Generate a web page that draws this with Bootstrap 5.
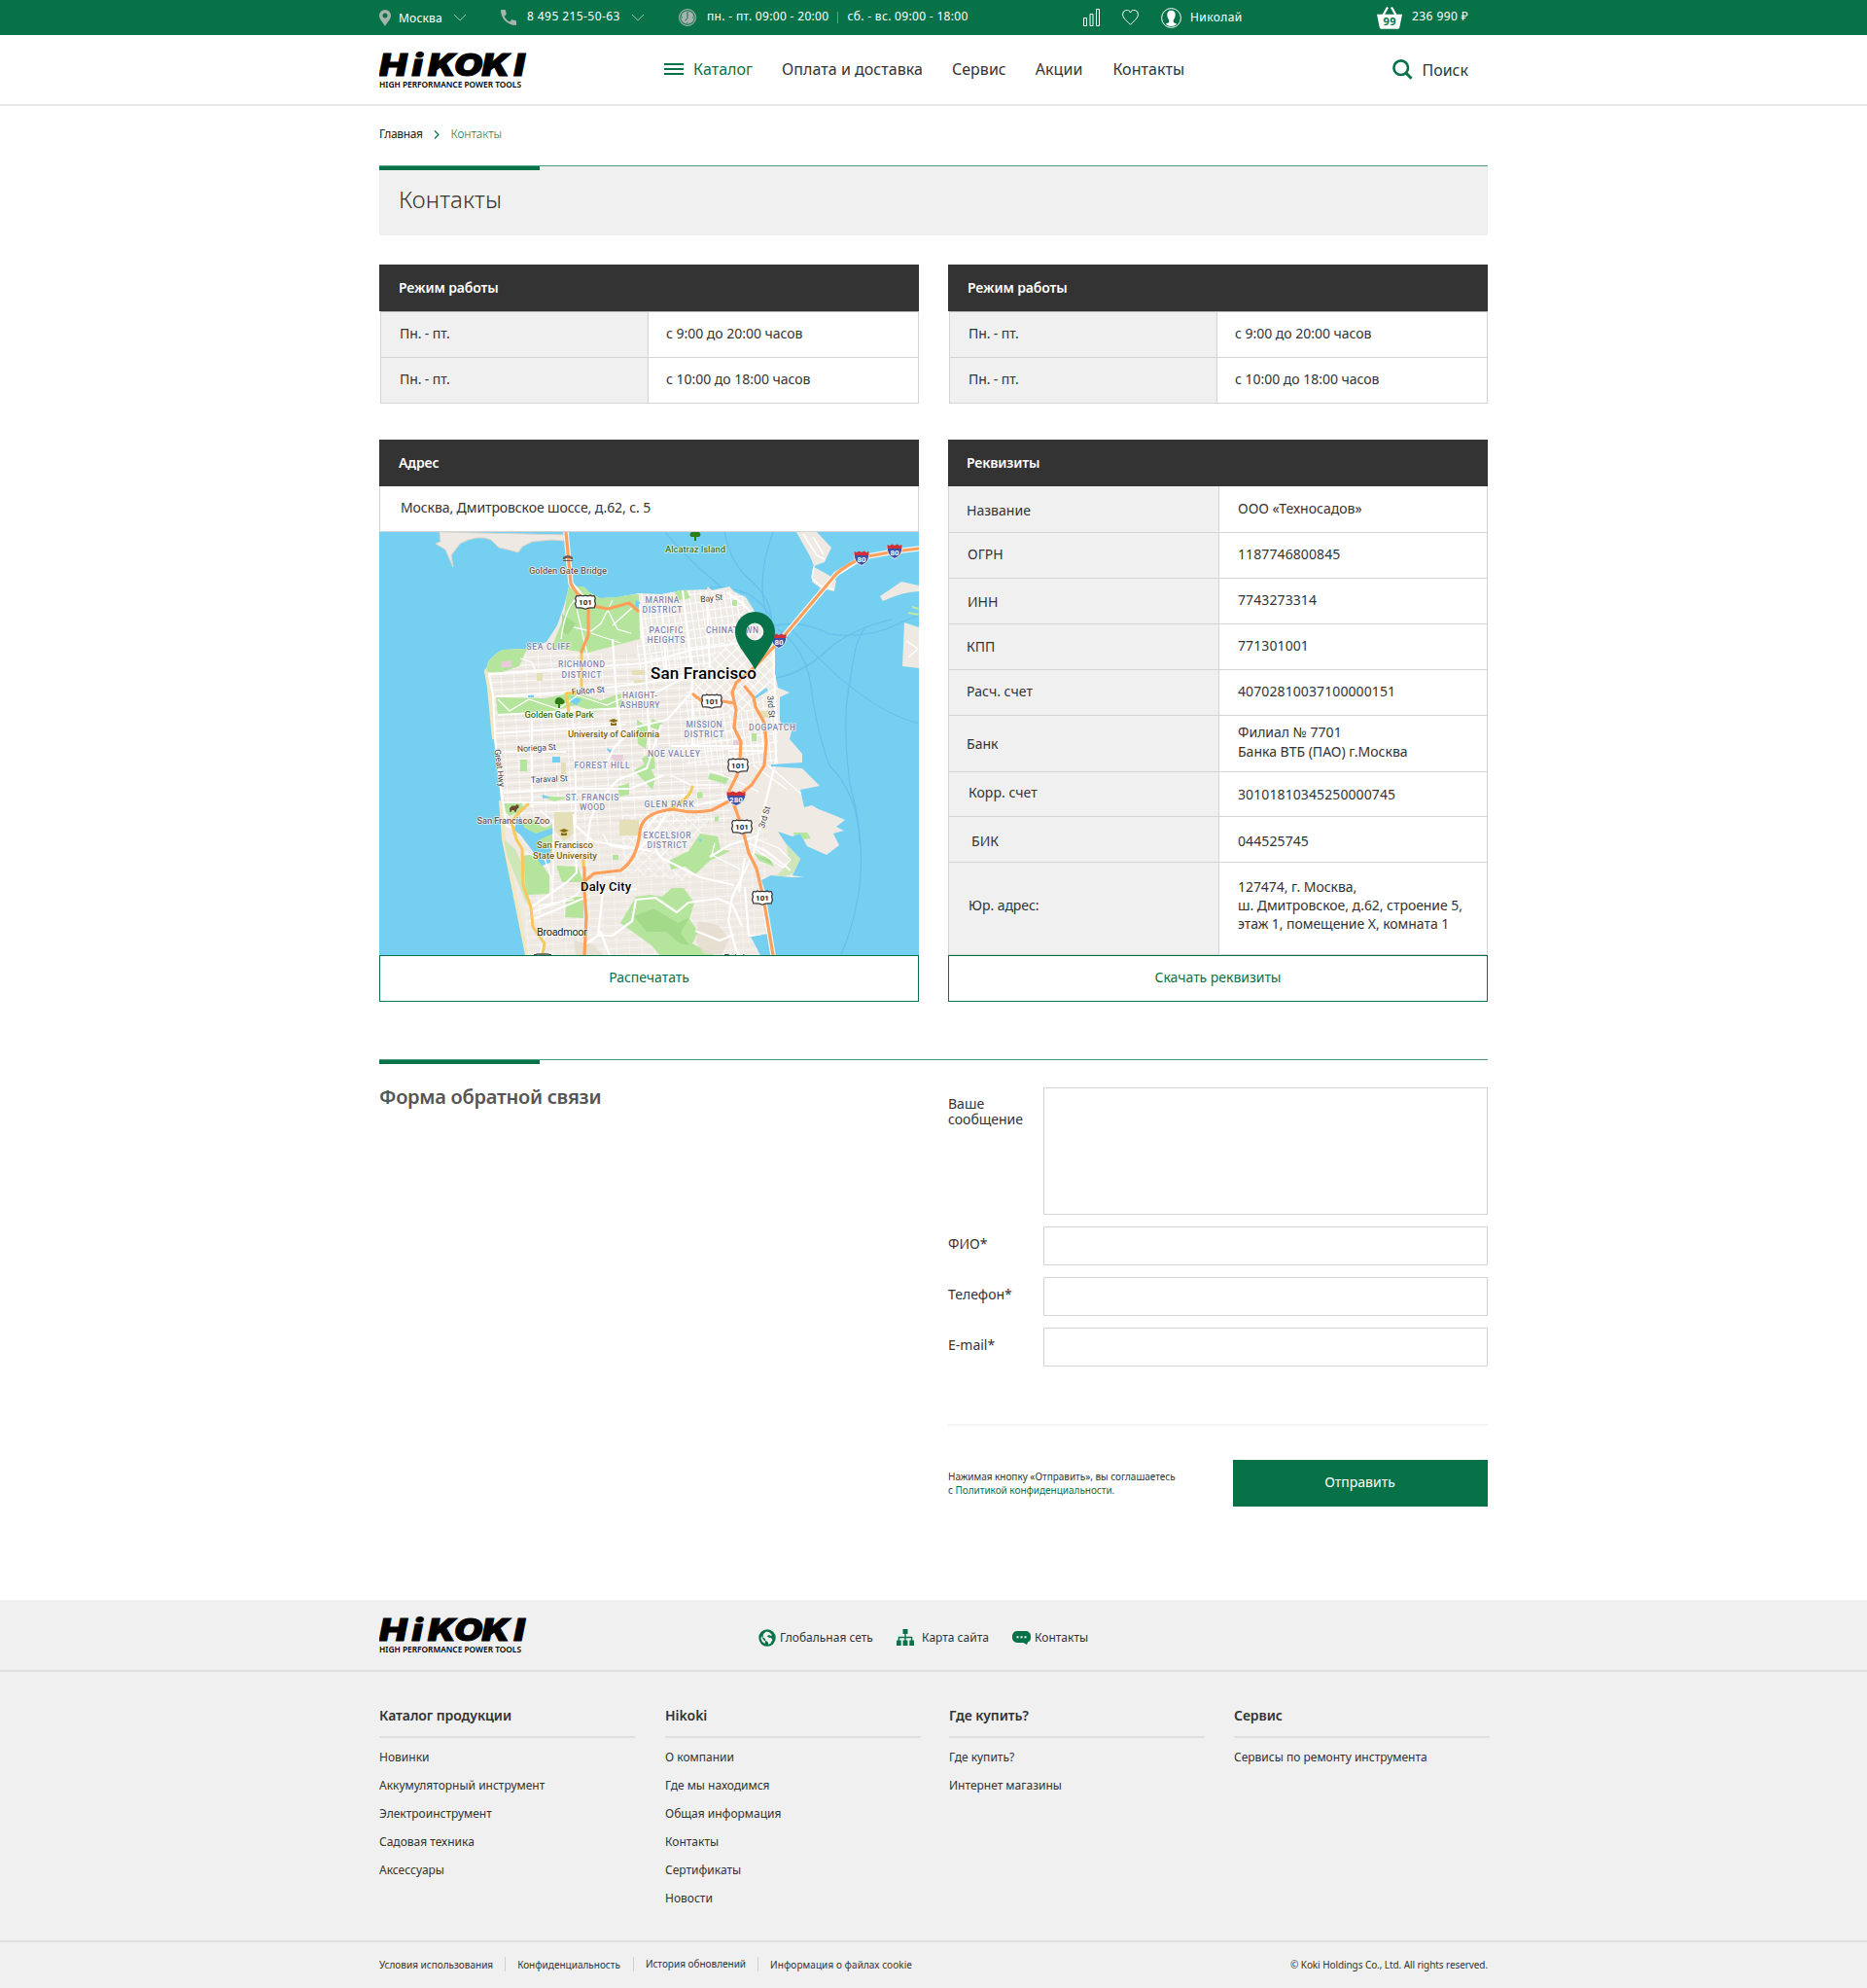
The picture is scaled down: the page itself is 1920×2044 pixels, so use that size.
<!DOCTYPE html>
<html lang="ru">
<head>
<meta charset="utf-8">
<meta name="viewport" content="width=device-width, initial-scale=1">
<title>HiKOKI — Контакты</title>
<link href="https://cdn.jsdelivr.net/npm/bootstrap@5.3.0/dist/css/bootstrap.min.css" rel="stylesheet">
<style>
:root{--green:#077248;--ink:#333;--line:#d4d4d4;--soft:#f0f0f0}
body{font-family:"Noto Sans","Open Sans",sans-serif;font-size:14px;line-height:20px;color:var(--ink);background:#fff}
a{color:inherit;text-decoration:none}
svg{display:block;flex:none}
.wrap{width:1140px;margin:0 auto}
.topbar{background:var(--green);height:36px;color:#fff;font-size:12px;letter-spacing:.42px}
.topbar .up{padding-bottom:2px}
.slot-city{width:125px}.slot-phone{width:183px}.slot-time{width:415px;letter-spacing:.32px}
.slot-stat{width:41px}.slot-fav{width:40px}.slot-user{width:222px}
.city-name{margin-left:8px;letter-spacing:.2px;padding-top:1px}
.chev-city{margin-right:35px}
.gap-l{margin-left:11px}.gap-m{margin-left:9px}.gap-s{margin-left:4px}.gap-x{margin-left:10px}
.vsep{width:1px;height:12px;background:#5d9f84;margin:0 9px}
.mainbar{height:73px;border-bottom:2px solid #e8e8e8;font-size:16px}
.mainbar .links{margin-left:140px;gap:30px;padding-bottom:1px;letter-spacing:.04px}
.mainbar .links a:last-child{margin-left:1px}
.cat{color:var(--green)}
.find{margin-right:20px}
.brand{width:153px;height:38px}
.crumbs{font-size:12px;height:61px;padding-bottom:3px;color:#222;letter-spacing:-.38px}
.crumbs svg{margin:1px 12px 0 11px}
.crumbs .cur{color:var(--green);font-weight:300;letter-spacing:0}
.rule{height:5px;border-top:1px solid #4c9b7c;position:relative}
.rule::before{content:"";display:block;width:165px;height:4px;background:var(--green)}
.rule.on-soft{background:var(--soft)}
.title-box{height:67px;background:var(--soft);padding:13px 20px 0;font-size:24px;font-weight:300;line-height:34px;margin:0;letter-spacing:.15px}
.half{width:555px}
.head{height:48px;background:#333;color:#fff;font-weight:600;line-height:48px;padding:0 20px;margin:0;font-size:14px;letter-spacing:-.13px}
.head.req-head{padding-left:19px}
.info{border-left:1px solid var(--line);border-right:1px solid var(--line)}
.info>div{border-bottom:1px solid var(--line)}
.key{background:var(--soft);border-right:1px solid var(--line);padding-left:19px;padding-bottom:2px}
.val{padding-left:19px;padding-bottom:2px;line-height:19.3px}
.hours{margin-left:1px;border-top:1px solid #bbb;letter-spacing:-.02px}
.hours>div{height:47px}.hours .key{width:275px;letter-spacing:-.1px}.hours .val{padding-left:18px}
.req .key{width:278px;letter-spacing:.03px}
.num{letter-spacing:.1px}
.req .r48{height:48px}.req .r47{height:47px}.req .r46{height:46px}.req .r58{height:58px}.req .r95{height:95px}
.req .low{padding-bottom:0}.req .low2{padding-top:2px;padding-bottom:0}.req .low3{padding-top:4px;padding-bottom:0}
.req .high{padding-bottom:4px}
.req .pl-18{padding-left:18px}.req .pl-20{padding-left:20px}.req .pl-23{padding-left:23px}
.req .jur{padding-bottom:7px;letter-spacing:-.05px}
.addr{height:47px;padding:0 21px 2px;letter-spacing:-.1px}
.btn-line{height:48px;border:1px solid var(--green);border-radius:0;color:var(--green);font-size:14px;letter-spacing:-.03px;padding:0 0 3px;width:100%}
.fb-title{font-size:20px;font-weight:600;line-height:28px;color:#555;margin:0;letter-spacing:-.27px;padding-top:20px}
.f-lab{width:98px;line-height:16px;padding-top:10px}
.f-lab.first{padding-top:9px}
.f-in{border:1px solid var(--line);border-radius:0;height:40px;padding:8px 12px;flex:1}
.f-in.tall{height:131px;resize:none}
.thin{height:2px;background:#f4f4f4;margin:59px 0 35px}
.fine{font-size:10px;line-height:14px;width:293px;padding-top:10px;letter-spacing:-.02px}
.send{width:262px;height:48px;border-radius:0;background:var(--green);color:#fff;font-size:14px;padding:0 1px 3px 0}
.foot{background:var(--soft);height:399px}
.foot-top{height:74px;border-bottom:2px solid #dfdfdf;font-size:12px}
.foot-top a{padding-top:5px}
.fcols{height:276px;padding-top:32px;font-size:12px}
.fcol{width:263px}
.fcol h3{font-size:14px;font-weight:600;line-height:26px;margin:0;height:34px;letter-spacing:-.07px}
.fcol hr{margin:0 0 5px;border:0;height:2px;background:#dfdfdf;opacity:1}
.fcol a{display:block;line-height:29px}
.foot-bot{border-top:2px solid #dfdfdf;height:49px;font-size:10px;line-height:14px;padding-bottom:2px}
.bsep{width:1px;height:15px;background:#d0d0d0;margin:0 12px}
.map text{font-family:Roboto,"Open Sans",sans-serif;font-size:9.5px;text-anchor:middle;paint-order:stroke;stroke:#fff;stroke-width:1.6px;stroke-opacity:.7;stroke-linejoin:round;font-weight:500}
.map .hood{fill:#7f87b2;font-size:8.5px}
.map .st{fill:#444;font-size:8.8px;font-weight:400}
.map .edu{fill:#7a6210}.map .poi{fill:#76584c}.map .grn{fill:#34761d}
.map .city-l{font-size:17px}.map .city-m{font-size:13px}.map .city-s{font-size:11px;font-weight:400;fill:#222}
.map .rt-us{stroke:none;fill:#222;font-size:8px;font-weight:700}
.map .rt-i{stroke:none;fill:#fff;font-size:8px;font-weight:700}
</style>
</head>
<body>
<svg width="0" height="0" class="position-absolute" aria-hidden="true">
  <defs>
    <symbol id="logo" viewBox="0 0 153 38">
      <text transform="translate(0 25) scale(1.22 1)" x="0 27.400 41 63.200 86.400 113.500" y="0" font-family="Inter, Roboto, sans-serif" font-weight="900" font-style="italic" font-size="31" stroke="#000" stroke-width=".9">HiKOKI</text>
      <text x="0" y="36.500" font-family="Noto Sans, sans-serif" font-weight="600" font-size="8.600" textLength="146" lengthAdjust="spacingAndGlyphs">HIGH PERFORMANCE POWER TOOLS</text>
    </symbol>
    <symbol id="chev" viewBox="0 0 14 8"><path d="M1 1l6 6 6-6" fill="none" stroke="#9cc4b2" stroke-width="1"/></symbol>
  </defs>
</svg>

<div class="topbar">
  <div class="wrap d-flex align-items-center h-100">
    <div class="slot-city d-flex align-items-center">
      <svg width="12" height="17" viewBox="0 0 12 17"><path fill="#a7b3ae" fill-rule="evenodd" d="M6 0a6 6 0 0 1 6 6c0 4-4 7-6 11C4 13 0 10 0 6a6 6 0 0 1 6-6zm0 3.500a2.500 2.500 0 1 0 0 5 2.500 2.500 0 0 0 0-5z"/></svg>
      <span class="city-name">Москва</span><svg class="ms-auto chev-city" width="14" height="8"><use href="#chev"/></svg>
    </div>
    <div class="slot-phone d-flex align-items-center">
      <svg width="16" height="16" viewBox="0 0 16 16"><path fill="#a7b3ae" d="M.5 0h3.600c.5 0 .8.400.9.800l.7 3.300c.1.400 0 .7-.3 1L3.600 6.700c1.200 2.500 3.200 4.500 5.700 5.700l1.600-1.800c.3-.3.600-.4 1-.3l3.300.7c.4.100.8.500.8.900v3.600c0 .3-.2.500-.5.500C7 16 0 9 0 .5 0 .2.200 0 .5 0z"/></svg>
      <span class="up gap-l">8 495 215-50-63</span><svg class="gap-l" width="14" height="8"><use href="#chev"/></svg>
    </div>
    <div class="slot-time d-flex align-items-center">
      <svg width="18" height="18" viewBox="0 0 18 18"><circle cx="9" cy="9" r="8.400" fill="none" stroke="#a7b3ae" stroke-width="1.200"/><circle cx="9" cy="9" r="6.800" fill="#a7b3ae"/><path d="M9 4v5.500L6.500 12.500M9 3v1M9 14v1M3 9h1M14 9h1" stroke="#077248" fill="none"/></svg>
      <span class="up gap-l">пн. - пт. 09:00 - 20:00</span><i class="vsep"></i><span class="up">сб. - вс. 09:00 - 18:00</span>
    </div>
    <a class="slot-stat" href="#"><svg width="18" height="18" viewBox="0 0 18 18" fill="none" stroke="#fff"><path d="M1.500 9.500h3v8h-3zM8 5.500h3v12H8zM14.500.500h3v17h-3z"/></svg></a>
    <a class="slot-fav" href="#"><svg width="17" height="16" viewBox="0 0 17 16" fill="none" stroke="#fff"><path d="M8.500 15.300C6 12.500.6 9 .6 4.800A4.100 4.100 0 0 1 8.500 3a4.100 4.100 0 0 1 7.900 1.800c0 4.200-5.400 7.700-7.900 10.500z"/></svg></a>
    <a class="slot-user d-flex align-items-center" href="#"><svg width="21" height="21" viewBox="0 0 21 21"><circle cx="10.500" cy="10.500" r="9.900" fill="none" stroke="#fff"/><path fill="#fff" d="M10.500 2.800c3 0 4.400 2 4.200 4.500-.1 2.200-.8 4-2 5.200v2c.4 1 2.300 1.400 3.600 2.300a8.800 8.800 0 0 1-11.600 0c1.300-.9 3.200-1.300 3.600-2.300v-2c-1.200-1.200-1.900-3-2-5.200-.2-2.500 1.200-4.500 4.200-4.500z"/></svg><span class="gap-m">Николай</span></a>
    <a class="d-flex align-items-center" href="#"><svg width="26" height="23" viewBox="0 0 26 23"><path d="M6.500 8.500l4.500-8M19.500 8.500L15 .5" stroke="#fff" stroke-width="2.200"/><path fill="#fff" d="M0 7.800h26L23.300 21c-.2 1.200-.8 1.800-2 1.800H4.700c-1.200 0-1.800-.6-2-1.800z"/><text x="13.200" y="19" text-anchor="middle" font-size="11" font-weight="700" fill="#077248" font-family="Noto Sans, sans-serif">99</text></svg><span class="up gap-x">236 990 ₽</span></a>
  </div>
</div>

<header class="mainbar">
  <div class="wrap d-flex align-items-center h-100">
    <svg class="brand"><use href="#logo"/></svg>
    <nav class="links d-flex align-items-center">
      <a href="#" class="cat d-flex align-items-center"><svg width="20" height="12" viewBox="0 0 20 12"><path d="M0 1h20M0 6h20M0 11h20" stroke="#077248" stroke-width="2"/></svg><span class="gap-x">Каталог</span></a>
      <a href="#">Оплата и доставка</a><a href="#">Сервис</a><a href="#">Акции</a><a href="#">Контакты</a>
    </nav>
    <a href="#" class="find d-flex align-items-center ms-auto"><svg width="21" height="21" viewBox="0 0 21 21" fill="none" stroke="#077248"><circle cx="8.700" cy="8.700" r="7.300" stroke-width="2.600"/><path d="M13.500 13.500l6 6.300" stroke-width="3"/></svg><span class="gap-m">Поиск</span></a>
  </div>
</header>

<main class="wrap">
  <nav class="crumbs d-flex align-items-center"><a href="#">Главная</a><svg width="6" height="9" viewBox="0 0 6 9"><path d="M1 .5l4 4-4 4" fill="none" stroke="#077248" stroke-width="1.200"/></svg><span class="cur">Контакты</span></nav>
  <div class="rule on-soft"></div>
  <h1 class="title-box">Контакты</h1>

  <div class="d-flex justify-content-between" style="margin-top:30px">
    <section class="half"><h2 class="head">Режим работы</h2>
      <div class="info hours"><div class="d-flex"><div class="key d-flex align-items-center">Пн. - пт.</div><div class="val d-flex align-items-center">с 9:00 до 20:00 часов</div></div><div class="d-flex"><div class="key d-flex align-items-center">Пн. - пт.</div><div class="val d-flex align-items-center">с 10:00 до 18:00 часов</div></div></div>
    </section>
    <section class="half"><h2 class="head">Режим работы</h2>
      <div class="info hours"><div class="d-flex"><div class="key d-flex align-items-center">Пн. - пт.</div><div class="val d-flex align-items-center">с 9:00 до 20:00 часов</div></div><div class="d-flex"><div class="key d-flex align-items-center">Пн. - пт.</div><div class="val d-flex align-items-center">с 10:00 до 18:00 часов</div></div></div>
    </section>
  </div>

  <div class="d-flex justify-content-between" style="margin-top:37px">
    <section class="half"><h2 class="head">Адрес</h2>
      <div class="info"><div class="addr d-flex align-items-center">Москва, Дмитровское шоссе, д.62, с. 5</div></div>
      <svg class="map" width="555" height="435" viewBox="0 0 555 435">
        <defs>
          <path id="sf" d="M152 435L137 360 128 316 125 276 118 213 113 160 110 143 112 133 120 125 127 121 150 120 160 117 172 113 183 96 190 76 195 56 210 56 216 62 227 68 245 67 267 63 290 64 310 60 337 59 338 56 342 60 360 56 366 62 377 67 387 83 403 100 407 123 407 146 410 160 422 165 412 170 412 193 414 199 425 201 422 213 435 228 435 237 403 239 403 241 435 243 453 261 433 265 437 283 445 281 452 285 470 292 479 296 470 303 478 307 467 310 473 322 460 332 440 323 433 310 425 313 410 308 418 320 433 336 425 353 437 355 423 355 403 353 393 358 398 373 400 413 382 416 392 435z"/>
          <clipPath id="cl"><use href="#sf"/></clipPath>
          <pattern id="g1" width="13" height="8" patternUnits="userSpaceOnUse" patternTransform="rotate(-3)"><path d="M0 .5h13M.5 0v8" stroke="#fff" stroke-width="1" opacity=".75"/><path d="M0 4.500h13" stroke="#e3dbd8" stroke-width=".6"/></pattern>
          <pattern id="g2" width="8" height="8" patternUnits="userSpaceOnUse" patternTransform="rotate(45)"><path d="M0 .5h8M.5 0v8" stroke="#fff" stroke-width="1.200"/></pattern>
          <pattern id="g3" width="6" height="9" patternUnits="userSpaceOnUse" patternTransform="rotate(-8)"><path d="M0 .5h6M.5 0v9" stroke="#fff" stroke-width="1"/></pattern>
          <g id="us"><path d="M-9-6.500q2.500 1 4-.6 2 1.400 5 .3 3 1.100 5-.3 1.500 1.600 4 .6l1.300 2.700q-1.500 2.500.2 5.500l-1.500 4.300q-5-.6-9 1.200-4-1.800-9-1.200L-10.500 1.700q1.700-3 .2-5.500z" fill="#fff" stroke="#333" stroke-width="1.200"/><text class="rt-us" y="3">101</text></g>
          <g id="i80"><path d="M-7.500-5.500h15q1.500 9-7.500 13-9-4-7.500-13z" fill="#3e4fa8" stroke="#fff" stroke-width=".8"/><path d="M-7.500-3v-4l2.500 1 2.500-1.500L0-6l2.500-1.500L5-6l2.500-1v4z" fill="#cf2f36"/><text class="rt-i" y="4">80</text></g>
        </defs>
        <rect width="555" height="435" fill="#75cff0"/>
        <g fill="none" stroke="#5db7e6" stroke-width="1.100" opacity=".65">
          <path d="M294 0q20 25 50 50t30 55M355 0q5 30 25 48 30 25 22 60M405 0q-22 60 0 100M330 64q10-15 50 0 28 18 25 40M403 97q30-8 60 8 40 5 70-10t22-4M500 99q-10 8-15 50-10 40-1 110 14 50 11 95-3 40-20 81"/>
          <path d="M410 100q30 20 35 65 5 40 18 75 30 30 31 80M408 150q30-5 60-35 30-20 60-25M425 101q70 80 130 96"/>
        </g>
        <g fill="#efe9e3"><path d="M62 0l1 10-5 2 10 6 8 18-2-12 9-12q18-10 32-4l8 8 9 2 11 3 4-6 10-5 20-2 12 1 3-6z" stroke="#ded6cd"/>
          <path d="M429 0h21l15 16-7 15-11 4-4-10zM447 36l13 7 10 7-2 11-14-3-9-7zM515 66l22-15 18 4v6q-15 0-37 10zM540 93l15 5v42l-17-2z"/></g>
        <path d="M436 2l14 22 8 4M446 5l11 18M447 35l-2 12 8 8 14 4M542 112l12 8-10 9" fill="none" stroke="#fff" stroke-width="1.500"/>
        <path d="M544 83l11 2M548 77l7 2" stroke="#c5e9a0" stroke-width="2"/>
        <use href="#sf" fill="#f0eae4"/>
        <path d="M118 213l-5-53-3-17 4-5M152 435l-15-75-9-44-3-40" fill="none" stroke="#f3e6c2" stroke-width="4"/>
        <g clip-path="url(#cl)">
          <path d="M112 125h250v175h-235z" fill="url(#g1)"/><path d="M265 60h115l-20 90h-95z" fill="url(#g3)"/><path d="M315 160h95v80h-95z" fill="url(#g3)"/>
          <path d="M408 90v75l-42 25-35-20-10-15 50-60z" fill="#f0eae4"/><path d="M408 90v75l-42 25-35-20-10-15 50-60z" fill="url(#g2)"/>
          <path d="M150 295h250v140h-250z" fill="url(#g1)" opacity=".55"/><path d="M250 290l90 0 -20 70-70-10z" fill="url(#g2)" opacity=".6"/>
          <g fill="#b5e59c">
            <path d="M180 112l10-25 4-34 18 2 15 12 40-3 1 46-53 14-38-5zM110 143l2-12 15-12 25 1-8 18-24 8zM120 170l50 1 30-6 28 8 20-7 4 13-30 6-20-7-30 8-50 3z"/>
            <path d="M148 333l12-2 15 22v19l-24 1zM182 343l22 1 6 16-22 0zM193 375h17v22l-19-1zM140 300l20-5q8 14 18 5l0 30-12-5-18-15zM128 277h17l5 8-16 7-6-6zM165 271l30 2-15 4zM145 234h7v12h-7z"/>
            <path d="M248 402l16-27 15-2 12 2 10-9 12 0 11 15-5 17 9 13-6 12 26 14H290l-10-12z"/>
            <path d="M298 338l20-10 12-18 18 3 3 13 10 2-21 10-15 14-10-8-15 3zM385 330l16 5 5 9-15-6zM265 193l12 8-3 22-8-5zM262 245l14-8 8 16-3 12zM340 248l20 5-4 6-18-5zM245 262l12-4v12l-10 2zM270 233l12-8 2 18-8 2zM383 207h5v8h-5zM363 70h5v6h-5zM303 60l12-2 5 10-12 2zM280 192l11 4-2 8-10-3zM435 236h6l4 8-8 2zM426 309l14 0 4 6-16 2zM327 268l5-1 1 6-6 1zM345 293l4-1v5l-4 1zM240 332h6v5h-6z"/>
          </g>
          <path d="M418 312l15 8 8 14-12 16-15 5-5-2 12-12zM128 316l12 10 8 18 4 40-8-20-12-30z" fill="#cfe6b8"/>
          <g fill="#9bd683" opacity=".7"><path d="M262 395l20-8 25 15 12-6-9 16 9 13-10-2-14-12-20 0zM188 84l14 10-8 12-6-4zM390 334l12 3 3 5z"/></g>
          <path d="M328 400l20 4 12 14-8 16h-18l-8-12zM200 420l20 4 10 11h-28z" fill="#e3dccd" opacity=".8"/>
          <g fill="#e5dfb7"><path d="M180 288h20v22l-10 8-10-12zM247 296h20v16h-20zM260 142h14v5h-14zM262 152h14v4h-14zM391 184h14v7h-14zM187 237h5v12h-5zM162 145h6v8h-6z"/></g>
          <path d="M126 133l10-1v7h-11zM237 229l14 0-1 10-8-3zM364 214h8v5h-8z" fill="#e9ccd9"/>
          <g fill="#75cff0"><path d="M145 292l4 12 12 6 18-6v6l-14 6 11 10v14l-9 3-10-16-12-16-7-5zM178 231h8v6h-8zM168 270l8 3-8 1zM198 169l10 3-5 6-6-3zM153 166h6v4h-6zM264 70l4 2-1 6-4-2zM233 222l9 3-5 2zM386 169l12-9 2 3-14 9zM328 315l4 1-2 3z"/></g>
          <g fill="none" stroke="#fff" stroke-width="2.200" stroke-linejoin="round">
            <path d="M113 147l4 20 3 60 7 50 4 25 8 3M112 146l100-7 60-4 50-14 85-12M120 169l80-5 68-8 55-9M122 188l130-7 60-30M118 207l75-5 60-4M127 226h65M128 268l70-4 60 0 35-14M157 188v95M198 180l4 75v45M127 278l75 0 60-5 60-3"/>
            <path d="M312 60l10 90 0 70M290 70l6 80M268 74l6 60 4 90M337 70l3 70M357 62l15 10 18 18 15 20 2 60 1 65-15 60-8 35-22 45-4 25 8 30 25 35M240 110l4 60 5 40"/>
            <path d="M321 165l-25 28-34 8-20 20-10 20M290 198l-15 45-30 12-20 22-8 20-4 30M200 290l3 60-10 10-36 25M200 300l20 18 60 10M270 305l20 30 40 20 35 8M212 362l-10 12-48 18M210 360l20 10 35-3M290 285l-15 20M360 225h40M300 220h100M303 285l62-12M298 285l-15 25-20 20"/>
            <path d="M230 370l-5 45-15 10M225 415l15 0 20-15 4-22 20-2 22 15 12-10 30-4 15 6 10 22M237 435l-10-25M325 410l25 10 15-6M340 334l20-12 30-10M380 320l18 8 25 20M370 370l6-35M376 365l4 50 15 0M154 400l60-25"/>
          </g>
          <g fill="none" stroke="#fff" stroke-width="1.300"><path d="M187 110q4-30 14-40l14 60M200 98l18 4 10-8 12-24M218 104l30 10M235 80l10 20 14 4M240 96l20-18M122 172l12 12 20-12 30 10 20-14 30 10 18-8M145 130l12 4 4 10M150 330l20 6 8 22 0 25M165 286l14 12v60M165 435l5-20 40-4M165 392v-8l35-6M230 310l6 12 20 4M230 355h12v8M300 250l20 10 30 0M340 245l30 12 20 10M385 240l35 25M400 240l35 30 10 10M345 320l-3 12 30 15M385 325l30 20 8-8-12-12-25-10"/></g>
        </g>
        <g fill="none" stroke-linejoin="round" stroke-linecap="round">
          <g stroke="#fff" stroke-width="5.500" opacity=".85"><path d="M192 0l5 53 15 18M555 17l-25 3-33 6-27 17-53 63M395 376l10 59"/></g>
          <g stroke="#f6c95a" stroke-width="3"><path d="M208 123v42l-16 1 3 20M153 280q-18 15-16 22l4 14 6 10 1 37 8 23 2 20 12 17-2 11M322 262q-2 12-24 23M210 332v12"/></g>
          <g stroke="#ff9f5a" stroke-width="3.200"><path d="M192 0l5 53q5 10 15 18l8 5 15 3 22-6 9 8M215 76v30l-7 17M555 17l-25 3-33 6q-18 9-27 17l-53 63-30 32-20 17-4 10 4 18-2 18 7 15-1 17-3 17-8 16 5 15 8 22 7 27 8 16 7 30 10 59M323 167l9 7h21l12 2M376 159l9 11 2 10 9 16 2 20-2 24-13 20-16 13-25 13q-20 4-39-1-34 3-35 24-3 28-20 39l-27 3-11 9M211 345l0 25 2 26-2 39"/></g>
        </g>
        <g fill="#2e7d16"><path d="M321 0h8q3 3 0 5l-3 0v4h-2V5l-3 0q-3-2 0-5zM181 173q1-3 4-3t5 3-2 4l-2 0v4h-2v-4l-2 0q-2-1-1-4z"/></g>
        <path d="M189 26q5-4 10 0v2h-1.500q-3.500-3-7 0H189zM189 29h10v1h-10z" fill="#76584c"/><path d="M134 284l2.500-2.500 4 0 1-1.500 2 1v2.500l-2 1.500-1 3h-1l-1-2-2 0-1 2h-1z" fill="#6b4a2c"/>
        <g fill="#8a6c0a"><path d="M241 192l5 2-5 2-5-2zM238 196l3 1 3-1v3h-6zM190 305l5 2-5 2-5-2zM187 309l3 1 3-1v3h-6z"/></g>
        <text class="poi" x="194" y="42.500" textLength="80">Golden Gate Bridge</text><text class="grn" x="325" y="20.500" textLength="62">Alcatraz Island</text>
        <text class="hood" x="174" y="121" textLength="45">SEA CLIFF</text><text class="hood" x="208" y="139" textLength="48">RICHMOND</text><text class="hood" x="208" y="149.500" textLength="41">DISTRICT</text>
        <text class="st" x="215" y="166" textLength="34" transform="rotate(-4 215 166)">Fulton St</text><text class="grn" x="185" y="191" textLength="71">Golden Gate Park</text>
        <text class="hood" x="291" y="73" textLength="35">MARINA</text><text class="hood" x="291" y="83" textLength="41">DISTRICT</text><text class="st" x="342" y="71" textLength="23" transform="rotate(-6 342 71)">Bay St</text>
        <text class="hood" x="295" y="103.500" textLength="35">PACIFIC</text><text class="hood" x="295" y="113.500" textLength="39">HEIGHTS</text><text class="hood" x="363" y="103.500" textLength="54">CHINATOWN</text>
        <text class="hood" x="268" y="170.500" textLength="36">HAIGHT-</text><text class="hood" x="268" y="180.500" textLength="41">ASHBURY</text><text class="hood" x="334" y="201" textLength="37">MISSION</text><text class="hood" x="334" y="211" textLength="41">DISTRICT</text>
        <text class="hood" x="404" y="204" textLength="48">DOGPATCH</text><text class="st" textLength="23" transform="translate(400 180) rotate(85)">3rd St</text><text class="st" textLength="23" transform="translate(399 294) rotate(-73)">3rd St</text>
        <text class="hood" x="303" y="231" textLength="54">NOE VALLEY</text><text class="edu" x="241" y="211" textLength="94">University of California</text><text class="st" x="162" y="225" textLength="40" transform="rotate(-3 162 225)">Noriega St</text>
        <text class="hood" x="229" y="243" textLength="57">FOREST HILL</text><text class="st" x="175" y="257" textLength="38" transform="rotate(-3 175 257)">Taraval St</text><text class="st" textLength="39" transform="translate(121 243) rotate(83)">Great Hwy</text>
        <text class="hood" x="219" y="276" textLength="55">ST. FRANCIS</text><text class="hood" x="219" y="286" textLength="26">WOOD</text><text class="poi" x="138" y="299.500" textLength="75">San Francisco Zoo</text>
        <text class="edu" x="191" y="324.500" textLength="58">San Francisco</text><text class="edu" x="191" y="336" textLength="66">State University</text><text class="hood" x="298" y="282.500" textLength="51">GLEN PARK</text>
        <text class="hood" x="296" y="314.500" textLength="49">EXCELSIOR</text><text class="hood" x="296" y="324.500" textLength="41">DISTRICT</text>
        <text class="city-m" x="233" y="368.500" textLength="52">Daly City</text><text class="city-s" x="188" y="415" textLength="52">Broadmoor</text><text class="city-s" x="376" y="441.500">Brisbane</text>
        <text class="city-l" x="333.500" y="151" textLength="109">San Francisco</text>
        <use href="#us" x="212" y="72"/><use href="#us" x="342" y="174"/><use href="#us" x="369" y="240"/><use href="#us" x="373" y="303"/><use href="#us" x="394" y="376"/><path d="M159 435q4-2 9-1 5-1 9 1z" fill="#fff" stroke="#333"/>
        <use href="#i80" x="496" y="27"/><use href="#i80" x="530" y="20"/><use href="#i80" x="411" y="112"/><g transform="translate(367 274)"><path d="M-9.500-5.500h19q1.500 9-9.500 13-11-4-9.500-13z" fill="#3e4fa8" stroke="#fff" stroke-width=".8"/><path d="M-9.500-3v-4l3 1 3-1.500L0-6l3.500-1.500 3 1.500 3-1v4z" fill="#cf2f36"/><text class="rt-i" y="4">280</text></g>
        <path d="M386.500 82a20.500 20.500 0 0 1 20.500 20.500c0 13-12 24-20.500 39-8.500-15-20.500-26-20.500-39A20.500 20.500 0 0 1 386.500 82zm-.2 11.500a9 9 0 1 0 0 18 9 9 0 0 0 0-18z" fill="#077248" fill-rule="evenodd"/>
      </svg>
      <button class="btn btn-line">Распечатать</button>
    </section>

    <section class="half"><h2 class="head req-head">Реквизиты</h2>
      <div class="info req">
        <div class="d-flex r48"><div class="key d-flex align-items-center low2 pl-18">Название</div><div class="val d-flex align-items-center">ООО «Техносадов»</div></div>
        <div class="d-flex r47"><div class="key d-flex align-items-center">ОГРН</div><div class="val d-flex align-items-center num">1187746800845</div></div>
        <div class="d-flex r47"><div class="key d-flex align-items-center low2">ИНН</div><div class="val d-flex align-items-center num">7743273314</div></div>
        <div class="d-flex r47"><div class="key d-flex align-items-center low pl-18">КПП</div><div class="val d-flex align-items-center num">771301001</div></div>
        <div class="d-flex r47"><div class="key d-flex align-items-center pl-18">Расч. счет</div><div class="val d-flex align-items-center num">40702810037100000151</div></div>
        <div class="d-flex r58"><div class="key d-flex align-items-center low pl-18">Банк</div><div class="val d-flex align-items-center high">Филиал № 7701<br>Банка ВТБ (ПАО) г.Москва</div></div>
        <div class="d-flex r46"><div class="key d-flex align-items-center pl-20 high">Корр. счет</div><div class="val d-flex align-items-center low num">30101810345250000745</div></div>
        <div class="d-flex r47"><div class="key d-flex align-items-center pl-23 low3">БИК</div><div class="val d-flex align-items-center num low3">044525745</div></div>
        <div class="d-flex r95"><div class="key d-flex align-items-center pl-20 jur">Юр. адрес:</div><div class="val d-flex align-items-center jur">127474, г. Москва,<br>ш. Дмитровское, д.62, строение 5,<br>этаж 1, помещение Х, комната 1</div></div>
      </div>
      <button class="btn btn-line">Скачать реквизиты</button>
    </section>
  </div>

  <div class="rule" style="margin-top:59px"></div>
  <div class="d-flex justify-content-between">
    <h2 class="fb-title">Форма обратной связи</h2>
    <form class="half" style="padding-top:24px">
      <div class="d-flex" style="margin-bottom:12px"><label class="f-lab first">Ваше сообщение</label><textarea class="form-control f-in tall"></textarea></div>
      <div class="d-flex" style="margin-bottom:12px"><label class="f-lab">ФИО*</label><input class="form-control f-in"></div>
      <div class="d-flex" style="margin-bottom:12px"><label class="f-lab">Телефон*</label><input class="form-control f-in"></div>
      <div class="d-flex"><label class="f-lab">E-mail*</label><input class="form-control f-in"></div>
      <div class="thin"></div>
      <div class="d-flex"><p class="fine mb-0">Нажимая кнопку «Отправить», вы соглашаетесь<br>с <a href="#" class="cat">Политикой конфиденциальности.</a></p><button type="button" class="btn send">Отправить</button></div>
    </form>
  </div>
</main>

<footer class="foot" style="margin-top:96px">
  <div class="foot-top"><div class="wrap d-flex align-items-center h-100">
    <svg class="brand"><use href="#logo"/></svg>
    <a href="#" class="d-flex align-items-center" style="margin-left:237px;width:142px"><svg width="18" height="18" viewBox="0 0 18 18"><circle cx="9" cy="9" r="8.700" fill="#077248"/><path d="M8 2.500l3 .5 3 3-1 1-2-1-2 1 1 1.500 3 .5 1.500 2-2 3.500-2 1.500-1-3-2-1-1-2.500-2-1 .5-3.500zM3 7l2 4 2 1.500-.5 2.500L4 13 2.500 10z" fill="#f0f0f0"/></svg><span class="gap-s">Глобальная сеть</span></a>
    <a href="#" class="d-flex align-items-center" style="width:119px"><svg width="18" height="17" viewBox="0 0 18 17"><path fill="#077248" d="M6.500 0h5v5h-5zM0 11.500h4.700V17H0zM6.600 11.500h4.800V17H6.600zM13.300 11.500H18V17h-4.700z"/><path d="M9 4v8M2.400 12V8.500h13.200V12" fill="none" stroke="#077248" stroke-width="1.400"/></svg><span style="margin-left:8px">Карта сайта</span></a>
    <a href="#" class="d-flex align-items-center"><svg width="19" height="14" viewBox="0 0 19 14"><path fill="#077248" d="M5 0h9a5 5 0 0 1 5 5v2a5 5 0 0 1-3 4.500l-1 2.500-3.500-2H5a5 5 0 0 1-5-5V5a5 5 0 0 1 5-5z"/><path d="M4.500 5.200h2v2h-2zM8.500 5.200h2v2h-2zM12.500 5.200h2v2h-2z" fill="#f0f0f0"/></svg><span class="gap-s">Контакты</span></a>
  </div></div>
  <div class="fcols wrap d-flex">
    <div class="fcol" style="margin-right:31px"><h3>Каталог продукции</h3><hr><a href="#">Новинки</a><a href="#">Аккумуляторный инструмент</a><a href="#">Электроинструмент</a><a href="#">Садовая техника</a><a href="#">Аксессуары</a></div>
    <div class="fcol" style="margin-right:29px"><h3>Hikoki</h3><hr><a href="#">О компании</a><a href="#">Где мы находимся</a><a href="#">Общая информация</a><a href="#">Контакты</a><a href="#">Сертификаты</a><a href="#">Новости</a></div>
    <div class="fcol" style="margin-right:30px"><h3>Где купить?</h3><hr><a href="#">Где купить?</a><a href="#">Интернет магазины</a></div>
    <div class="fcol" style="margin-right:-6px"><h3>Сервис</h3><hr><a href="#">Сервисы по ремонту инструмента</a></div>
  </div>
  <div class="foot-bot"><div class="wrap d-flex align-items-center h-100">
    <a href="#">Условия использования</a><i class="bsep"></i><a href="#">Конфиденциальность</a><i class="bsep" style="margin-left:13px"></i><a href="#" style="padding-bottom:2px">История обновлений</a><i class="bsep"></i><a href="#" style="letter-spacing:.07px">Информация о файлах cookie</a>
    <span class="ms-auto" style="letter-spacing:-.08px">© Koki Holdings Co., Ltd. All rights reserved.</span>
  </div></div>
</footer>
<script src="https://cdn.jsdelivr.net/npm/bootstrap@5.3.0/dist/js/bootstrap.bundle.min.js"></script>
</body>
</html>
